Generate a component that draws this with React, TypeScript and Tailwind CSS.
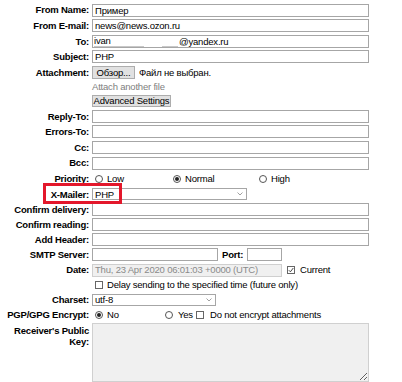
import React from "react";

const Label = ({ children }: { children: React.ReactNode }) => (
  <div className="w-[89px] mr-[3px] shrink-0 text-right font-bold">{children}</div>
);

const Field = ({ value = "", w = "w-[277px]" }: { value?: string; w?: string }) => (
  <input
    readOnly
    value={value}
    className={`${w} h-[13px] border border-[#a6a6a6] bg-white px-[2px] outline-none`}
  />
);

const Radio = ({ on = false }: { on?: boolean }) => (
  <span className="w-[8px] h-[8px] rounded-full border border-[#555] bg-white flex items-center justify-center shrink-0">
    {on && <span className="w-[4px] h-[4px] rounded-full bg-[#222]" />}
  </span>
);

const Check = ({ on = false }: { on?: boolean }) => (
  <span className="w-[8px] h-[8px] border border-[#666] bg-white flex items-center justify-center shrink-0">
    {on && (
      <svg width="6" height="6" viewBox="0 0 6 6">
        <path d="M0.8 3.2 L2.4 4.8 L5.3 1" fill="none" stroke="#333" strokeWidth="0.9" />
      </svg>
    )}
  </span>
);

const Chevron = () => (
  <svg width="6" height="4" viewBox="0 0 6 4">
    <path d="M0.5 0.5 L3 3 L5.5 0.5" fill="none" stroke="#888" strokeWidth="0.8" />
  </svg>
);

export default function App() {
  return (
    <div className="w-[402px] h-[382px] overflow-hidden bg-white text-black text-[9.5px] tracking-[-0.2px] leading-none font-['Liberation_Sans',Arial,sans-serif] pt-[2px]">
      <div className="flex h-[16px] items-center">
        <Label>From Name:</Label>
        <Field value="Пример" />
      </div>
      <div className="flex h-[15.5px] items-center">
        <Label>From E-mail:</Label>
        <Field value="news@news.ozon.ru" />
      </div>
      <div className="flex h-[15.5px] items-center">
        <Label>To:</Label>
        <div className="w-[277px] h-[13px] border border-[#a6a6a6] flex items-center pl-[1px]">
          <span className="w-[50px] h-[11px] border-b border-[#c8c8c8] flex items-center">ivan</span>
          <span className="w-[16px] ml-[18px] h-[11px] border-b border-[#c8c8c8]" />
          <span className="ml-[1px]">@yandex.ru</span>
        </div>
      </div>
      <div className="flex h-[15.5px] items-center">
        <Label>Subject:</Label>
        <Field value="PHP" />
      </div>
      <div className="flex h-[16px] items-center">
        <Label>Attachment:</Label>
        <button className="w-[43px] h-[13px] bg-[#e1e1e1] border border-[#adadad] leading-none">Обзор...</button>
        <span className="ml-[4px]">Файл не выбран.</span>
      </div>
      <div className="flex h-[12px] items-center pl-[92px] text-[#808080]">Attach another file</div>
      <div className="flex h-[16px] items-center pl-[92px]">
        <button className="w-[79px] h-[12px] bg-[#e1e1e1] border border-[#adadad] leading-none text-center">
          Advanced Settings
        </button>
      </div>
      <div className="flex h-[15.6px] items-center">
        <Label>Reply-To:</Label>
        <Field />
      </div>
      <div className="flex h-[15.6px] items-center">
        <Label>Errors-To:</Label>
        <Field />
      </div>
      <div className="flex h-[15.6px] items-center">
        <Label>Cc:</Label>
        <Field />
      </div>
      <div className="flex h-[15.6px] items-center">
        <Label>Bcc:</Label>
        <Field />
      </div>
      <div className="flex h-[15.5px] items-center">
        <Label>Priority:</Label>
        <div className="flex items-center w-[78px] ml-[3px] gap-[4px]">
          <Radio /> <span>Low</span>
        </div>
        <div className="flex items-center w-[86px] gap-[4px]">
          <Radio on /> <span>Normal</span>
        </div>
        <div className="flex items-center gap-[4px]">
          <Radio /> <span>High</span>
        </div>
      </div>
      <div className="relative flex h-[16px] items-center">
        <Label>X-Mailer:</Label>
        <div className="w-[155px] h-[12px] border border-[#a6a6a6] bg-white flex items-center justify-between pl-[2px] pr-[3px]">
          <span>PHP</span>
          <Chevron />
        </div>
        <div className="absolute left-[43px] top-[-3px] w-[79px] h-[21px] border-[3px] border-[#e3172b]" />
      </div>
      <div className="flex h-[15px] items-center">
        <Label>Confirm delivery:</Label>
        <Field />
      </div>
      <div className="flex h-[15px] items-center">
        <Label>Confirm reading:</Label>
        <Field />
      </div>
      <div className="flex h-[15px] items-center">
        <Label>Add Header:</Label>
        <Field />
      </div>
      <div className="flex h-[15px] items-center">
        <Label>SMTP Server:</Label>
        <Field w="w-[126px]" />
        <span className="ml-[4px] mr-[4px] font-bold">Port:</span>
        <Field w="w-[35px]" />
      </div>
      <div className="flex h-[15.5px] items-center">
        <Label>Date:</Label>
        <div className="w-[190px] h-[13px] border border-[#cfcfcf] bg-[#f0f0f0] text-[#8a8a8a] flex items-center pl-[2px]">
          Thu, 23 Apr 2020 06:01:03 +0000 (UTC)
        </div>
        <span className="ml-[5px]"><Check on /></span>
        <span className="ml-[5px]">Current</span>
      </div>
      <div className="flex h-[14.5px] items-center pl-[95px] gap-[4px]">
        <Check />
        <span>Delay sending to the specified time (future only)</span>
      </div>
      <div className="flex h-[15px] items-center">
        <Label>Charset:</Label>
        <div className="w-[124px] h-[12px] border border-[#a6a6a6] bg-white flex items-center justify-between pl-[2px] pr-[3px]">
          <span>utf-8</span>
          <Chevron />
        </div>
      </div>
      <div className="flex h-[15.5px] items-center">
        <Label>PGP/GPG Encrypt:</Label>
        <div className="flex items-center w-[70px] ml-[3px] gap-[4px]">
          <Radio on /> <span>No</span>
        </div>
        <div className="flex items-center w-[31px] gap-[5px]">
          <Radio /> <span>Yes</span>
        </div>
        <div className="flex items-center gap-[6px]">
          <Check /> <span>Do not encrypt attachments</span>
        </div>
      </div>
      <div className="flex items-start">
        <div className="w-[89px] mr-[3px] shrink-0 text-right font-bold leading-[11.5px] pt-[2px]">
          Receiver's Public
          <br />
          Key:
        </div>
        <textarea
          readOnly
          className="w-[277px] h-[59px] bg-[#f0f0f0] border border-[#d0d0d0] outline-none"
        />
      </div>
    </div>
  );
}
